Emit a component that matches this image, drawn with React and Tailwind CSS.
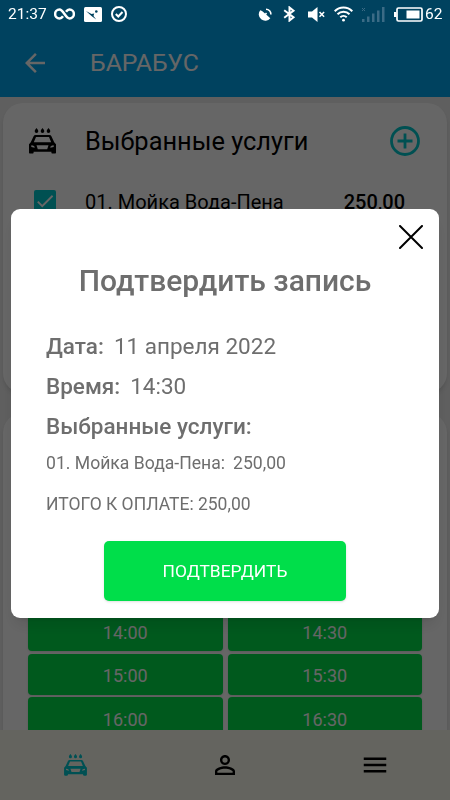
import React from 'react';
import { MdArrowBack, MdCheck, MdMenu, MdPersonOutline } from 'react-icons/md';

const slots = ['14:00', '14:30', '15:00', '15:30', '16:00', '16:30'];

function CarWashIcon({ className }) {
  return (
    <svg viewBox="0 0 27 26" className={className} fill="currentColor">
      <path d="M7.500 0c1.100 1.300 1.800 2.200 1.800 3.200a1.800 1.800 0 0 1-3.600 0c0-1 .7-1.900 1.800-3.200zM13.500 0c1.100 1.300 1.800 2.200 1.800 3.200a1.800 1.800 0 0 1-3.600 0c0-1 .7-1.900 1.800-3.200zM19.500 0c1.100 1.300 1.800 2.200 1.800 3.200a1.800 1.800 0 0 1-3.600 0c0-1 .7-1.900 1.800-3.200z" />
      <path
        fillRule="evenodd"
        d="M6.500 7h14c.9 0 1.500.4 1.900 1.200l2.800 6.100L27 16.300V24.600c0 .6-.4 1-1 1h-2.600c-.6 0-1-.4-1-1v-.8H4.600v.8c0 .6-.4 1-1 1H1c-.6 0-1-.4-1-1v-8.300l1.800-2 2.800-6.100C5 7.400 5.600 7 6.500 7zM7 8.900 4.800 14.200h17.400L20 8.900zM2.300 17.300v1.700l3.400.7c.1-1.400-1-2.200-3.400-2.400zM24.700 17.300v1.700l-3.400.7c-.1-1.400 1-2.200 3.400-2.400zM7.500 17.300l1.300 3.900h9.400l1.300-3.900z"
      />
    </svg>
  );
}

function StatusBar() {
  return (
    <div className="fixed inset-x-0 top-0 z-30 flex h-7 items-center justify-between pr-2 pl-2 text-[15.5px] text-white">
      <div className="flex items-center">
        <span className="w-[46px] pt-px">21:37</span>
        <svg viewBox="0 0 21 12" className="h-3 w-[21px]" fill="none" stroke="currentColor" strokeWidth="2.500">
          <path d="M9 8.200C8 9.600 6.800 10.400 5.500 10.400a4.300 4.300 0 0 1 0-8.800c3.800 0 6.200 8.800 10 8.800a4.300 4.300 0 0 0 0-8.800c-1.300 0-2.500.8-3.500 2.200" />
        </svg>
        <svg viewBox="0 0 18 15" className="ml-[9px] h-[15px] w-[18px]">
          <rect width="18" height="15" rx="1.500" fill="currentColor" />
          <path d="M2 4 7.500 7l2.700-.5-.7 2.500 2.700 3.500L7.500 9z" className="fill-[#00425f]" />
          <circle cx="12.300" cy="4.500" r="1.300" className="fill-[#00425f]" />
        </svg>
        <svg viewBox="0 0 16 16" className="ml-[9px] size-4" fill="none" stroke="currentColor" strokeWidth="2">
          <circle cx="8" cy="8" r="7" />
          <path d="m4.800 8 2.500 2.500 4.200-4.500" />
        </svg>
      </div>
      <div className="flex items-center">
        <svg viewBox="0 0 14 14" className="mt-0.5 size-3.5" fill="currentColor">
          <path d="M2.200 2.200C4 2.600 5.500 4 7 5.500s3.500 3 5.300 4.800A6.300 6.300 0 1 1 2.200 2.200z" />
          <path d="m6.500 7.500 2-2.500" stroke="currentColor" strokeWidth="1.500" />
          <path d="M8 1.200a5 5 0 0 1 4.900 5.300" fill="none" stroke="currentColor" strokeWidth="1.600" />
        </svg>
        <svg viewBox="0 0 13 16" className="ml-[11px] h-4 w-[13px]" fill="none" stroke="currentColor" strokeWidth="2">
          <path d="m1.200 4.300 9.300 7L6.500 14.500v-13l4 3.200-9.300 7" />
        </svg>
        <svg viewBox="0 0 17 15" className="ml-3 h-[15px] w-[17px]" fill="currentColor">
          <path d="M0 4.500h4L9.500 0v15L4 10.500H0z" />
          <path d="m11.500 5 4.600 4.800m0-4.800-4.600 4.800" stroke="currentColor" strokeWidth="1.500" />
        </svg>
        <svg viewBox="0 0 19 16" className="ml-[9px] h-4 w-[19px]" fill="none" stroke="currentColor" strokeWidth="2">
          <path d="M.7 5.200a12.500 12.500 0 0 1 17.600 0M3.500 8.300a8.500 8.500 0 0 1 12 0M6.300 11.200a4.600 4.600 0 0 1 6.400 0" />
          <circle cx="9.500" cy="14.200" r="1.400" fill="currentColor" stroke="none" />
        </svg>
        <svg viewBox="0 0 24 15" className="ml-2 h-[15px] w-6 text-[#3b6b85]" fill="currentColor">
          <path d="M1 12h2.500v3H1zM6 9.500h2.500V15H6zM11 6.500h2.500V15H11zM16 3.500h2.500V15H16zM21 0h2.500v15H21z" />
          <path d="m1 1 3 3m0-3L1 4" stroke="currentColor" />
        </svg>
        <svg viewBox="0 0 29 15" className="ml-[9px] h-[15px] w-[29px]">
          <rect x="3" y="1" width="25" height="13" rx="1.500" fill="none" stroke="currentColor" strokeWidth="1.700" />
          <path d="M0 5h2.500v5H0zM12.500 3.500h13v8h-13z" fill="currentColor" />
        </svg>
        <span className="ml-0.5 w-[17px] pt-px">62</span>
      </div>
    </div>
  );
}

function ConfirmDialog() {
  return (
    <div className="fixed inset-0 z-20 bg-black/60 px-[11px] pt-[209px]">
      <div className="flex h-[409px] flex-col rounded-[9px] bg-white px-[35px] pt-4 text-[#6e6e6e] shadow-lg">
        <div className="-mr-[19px] flex h-6 justify-end">
          <svg viewBox="0 0 24 24" className="size-6 text-black" fill="none" stroke="currentColor" strokeWidth="2" strokeLinecap="round">
            <path d="M1 1 23 23M23 1 1 23" />
          </svg>
        </div>
        <h2 className="mt-[11px] text-center text-[30px] leading-[42px] font-medium whitespace-nowrap">Подтвердить запись</h2>
        <p className="mt-6 text-[22.5px] leading-10">
          <b className="mr-2.5 font-medium">Дата:</b>11 апреля 2022
        </p>
        <p className="text-[22.5px] leading-10">
          <b className="mr-2.5 font-medium">Время:</b>14:30
        </p>
        <p className="text-[22.5px] leading-10 font-medium">Выбранные услуги:</p>
        <p className="text-[17.6px] leading-[34px]">
          <span className="mr-2">01. Мойка Вода-Пена:</span>250,00
        </p>
        <p className="mt-[7px] text-[17.5px] leading-[34px]">ИТОГО К ОПЛАТЕ: 250,00</p>
        <button className="mt-5 h-[60px] w-[242px] shrink-0 self-center rounded-[5px] bg-[#00de4a] text-[17.4px] text-white shadow">
          ПОДТВЕРДИТЬ
        </button>
      </div>
    </div>
  );
}

export default function App() {
  return (
    <div className="flex h-[800px] w-[450px] flex-col overflow-hidden bg-[#eeeeee] font-[Roboto,sans-serif]">
      <StatusBar />
      <header className="flex h-[97px] shrink-0 items-center bg-[#00a6ee] pt-[29px] pl-5 text-white">
        <MdArrowBack className="size-[30px]" />
        <h1 className="ml-10 text-[24.8px]">БАРАБУС</h1>
      </header>

      <main className="flex min-h-0 flex-1 flex-col gap-5 overflow-hidden px-[3px] pt-1.5">
        <section className="h-[290px] shrink-0 rounded-[20px] bg-white pt-[17px] pr-[27px] pl-[26px] shadow-md">
          <div className="flex h-[42px] items-center">
            <CarWashIcon className="h-[26px] w-[27px]" />
            <h2 className="ml-[29px] flex-1 text-[25.4px]">Выбранные услуги</h2>
            <svg viewBox="0 0 30 30" className="size-[30px] text-[#00c8cc]" fill="none" stroke="currentColor" strokeWidth="2.800">
              <circle cx="15" cy="15" r="13.500" />
              <path d="M15 7.500v15M7.500 15h15" />
            </svg>
          </div>
          <div className="mt-5 flex h-10 items-center pr-[15px] pl-[5px] text-[20px]">
            <span className="mb-0.5 flex size-[22px] items-center justify-center rounded-[2px] bg-[#00c8cc] text-white">
              <MdCheck className="size-[22px]" />
            </span>
            <span className="ml-[29px] flex-1">01. Мойка Вода-Пена</span>
            <span className="font-medium">250,00</span>
          </div>
        </section>

        <section className="h-[400px] shrink-0 rounded-[20px] bg-white px-[25px] pt-[197px] shadow-md">
          <div className="grid grid-cols-2 gap-x-[5px] gap-y-[2.600px]">
            {slots.map((time) => (
              <button key={time} className="h-[41px] rounded-[4px] bg-[#00de4a] pt-[3px] text-[18px] text-white shadow-sm">
                {time}
              </button>
            ))}
          </div>
        </section>
      </main>

      <nav className="grid h-[70px] shrink-0 grid-cols-3 place-items-center bg-[#fafbee]">
        <CarWashIcon className="h-[22px] w-[23px] text-[#00c8d0]" />
        <MdPersonOutline className="size-[30px]" />
        <MdMenu className="size-[30px]" />
      </nav>

      <ConfirmDialog />
    </div>
  );
}
